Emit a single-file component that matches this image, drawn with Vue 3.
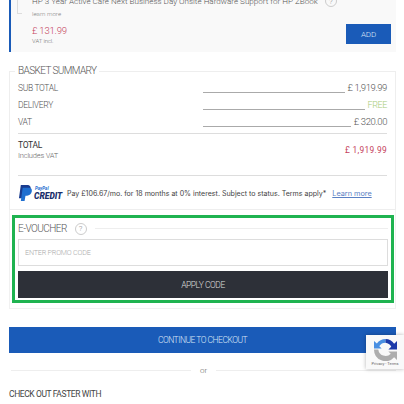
<script setup>
const rows = [
  { label: 'SUB TOTAL', value: '£ 1,919.99', cls: '' },
  { label: 'DELIVERY', value: 'FREE', cls: 'free' },
  { label: 'VAT', value: '£ 320.00', cls: '' }
]
</script>

<template>
  <main class="page">
    <section class="upsell">
      <div class="upsell-top">
        <span class="corner"></span>
        <div class="upsell-info">
          <div class="upsell-title">
            <span>HP 3 Year Active Care Next Business Day Onsite Hardware Support for HP ZBook</span>
            <span class="help">?</span>
          </div>
          <a class="learn">learn more</a>
        </div>
      </div>
      <div class="upsell-foot">
        <div>
          <div class="upsell-price">£ 131.99</div>
          <div class="vat-incl">VAT incl.</div>
        </div>
        <button class="add">ADD</button>
      </div>
    </section>

    <fieldset class="summary">
      <legend>BASKET SUMMARY</legend>
      <div class="row" v-for="row in rows" :key="row.label">
        <span class="row-label">{{ row.label }}</span>
        <span class="row-line"></span>
        <span class="row-value" :class="row.cls">{{ row.value }}</span>
      </div>
      <div class="total">
        <div>
          <div class="total-label">TOTAL</div>
          <div class="total-sub">Includes VAT</div>
        </div>
        <div class="total-value">£ 1,919.99</div>
      </div>
      <div class="credit">
        <svg class="pp" width="15" height="16" viewBox="0 0 16 17">
          <path d="M3 0h6.500C13 0 14 2 13.400 4.600 12.700 7.800 10.400 9 8 9H6l-1 5H1z" fill="#1a3c8f" />
          <path d="M5 3h6.600c2.600 0 3.600 1.800 3.100 4-.6 3-2.600 4.300-5 4.300H8L7 17H3z" fill="#1f6fd0" />
        </svg>
        <div class="pp-text">
          <span class="pp-top">PayPal</span>
          <span class="pp-bottom">CREDIT</span>
        </div>
        <span class="credit-text">Pay £106.67/mo. for 18 months at 0% interest. Subject to status. Terms apply*</span>
        <a class="credit-link">Learn more</a>
      </div>
    </fieldset>

    <div class="voucher-card">
      <div class="voucher">
        <div class="voucher-head">
          <span>E-VOUCHER</span>
          <span class="help">?</span>
          <span class="head-line"></span>
        </div>
        <input class="promo" placeholder="ENTER PROMO CODE" />
        <button class="apply">APPLY CODE</button>
      </div>
    </div>

    <button class="checkout">CONTINUE TO CHECKOUT</button>

    <div class="or"><span>or</span></div>
    <div class="faster">CHECK OUT FASTER WITH</div>

    <aside class="recaptcha">
      <svg width="23" height="23" viewBox="0 0 24 24">
        <path d="M12 1a11 11 0 0 0-9 4.700L0 3v8h8L5.500 8.500A8 8 0 0 1 12 5z" fill="#4a90e2" />
        <path d="M12 1a11 11 0 0 1 9 5l3-3v9h-9l3-3a8 8 0 0 0-6-4z" fill="#1c3aa9" />
        <path d="M0 12h4.500a7.600 7.600 0 0 0 13 4.500L15 14h9v9l-3-3A12 12 0 0 1 0 12z" fill="#adadad" />
      </svg>
      <span>Privacy - Terms</span>
    </aside>
  </main>
</template>

<style scoped>
.page {
  position: relative;
  width: 404px;
  height: 404px;
  overflow: hidden;
  padding: 0 8px 0 9px;
  box-sizing: border-box;
  font-family: Roboto, "Liberation Sans", sans-serif;
  font-weight: 300;
  color: #444;
  background: #fff;
}

.upsell {
  height: 60px;
  margin-top: -8px;
  padding: 3px 5px 0 6px;
  box-sizing: border-box;
  background: #f9f9f9;
  border-left: 2px solid #1a5bb8;
}

.upsell-top {
  display: flex;
  align-items: flex-start;
}

.corner {
  width: 5px;
  height: 19px;
  flex: none;
  border-left: 1px solid #ddd;
  border-bottom: 1px solid #ddd;
  box-sizing: border-box;
}

.upsell-info {
  margin-left: 10px;
  flex: 1;
}

.upsell-title {
  display: flex;
  align-items: center;
  gap: 7px;
  font-size: 8.100px;
  color: #555;
}

.learn {
  display: block;
  font-size: 6.200px;
  color: #888;
  margin-top: 3px;
}

.upsell-foot {
  display: flex;
  justify-content: space-between;
  margin-top: 4px;
  padding-left: 15px;
}

.upsell-price {
  font-size: 9.500px;
  letter-spacing: -0.2px;
  color: #c5415c;
  margin-top: 3px;
}

.vat-incl {
  font-size: 6px;
  letter-spacing: -0.1px;
  color: #777;
  margin-top: 1px;
}

.add {
  width: 45px;
  height: 20px;
  margin-top: 2px;
  border: 0;
  padding: 0;
  background: #1a5bb8;
  color: #dbe6f6;
  font: inherit;
  font-size: 8px;
  letter-spacing: -0.2px;
}

.summary {
  margin: 13px 0 0;
  padding: 2px 8px 0;
  height: 145px;
  box-sizing: border-box;
  border: 1px solid #eee;
  min-width: 0;
}

.summary legend {
  padding: 0 3px;
  margin-left: -3px;
  font-size: 10px;
  letter-spacing: -0.6px;
  line-height: 12px;
  color: #555;
}

.row {
  display: flex;
  align-items: flex-end;
  height: 17px;
  font-size: 8.500px;
  letter-spacing: -0.33px;
  color: #555;
}

.row-label {
  width: 185px;
  flex: none;
  align-self: center;
}

.row-line {
  flex: 1;
  height: 1px;
  margin: 0 3px 3px 0;
  background: #aaa;
}

.row-value {
  align-self: center;
  font-size: 9.500px;
  letter-spacing: -0.4px;
}

.free {
  color: #a8cc78;
  font-size: 9px;
}

.total {
  display: flex;
  justify-content: space-between;
  align-items: center;
  height: 43px;
  margin-top: 3px;
  padding-bottom: 9px;
  box-sizing: border-box;
  border-top: 1px solid #ddd;
  border-bottom: 1px solid #ddd;
}

.total-label {
  font-size: 8.500px;
  font-weight: 400;
  letter-spacing: -0.3px;
  color: #333;
}

.total-sub {
  font-size: 7.500px;
  letter-spacing: -0.2px;
  color: #666;
  margin-top: 1px;
}

.total-value {
  font-size: 8.400px;
  font-weight: 400;
  color: #c5415c;
  letter-spacing: 0.3px;
}

.credit {
  display: flex;
  align-items: center;
  margin-top: 9px;
}

.pp {
  flex: none;
}

.pp-text {
  display: flex;
  flex-direction: column;
  margin-left: 1px;
  width: 33px;
  flex: none;
}

.pp-top {
  font-size: 4.500px;
  font-style: italic;
  font-weight: 700;
  line-height: 5px;
  margin-left: 1px;
  color: #1f6fd0;
}

.pp-bottom {
  font-size: 8.500px;
  font-style: italic;
  font-weight: 900;
  line-height: 10px;
  color: #1a2f6b;
}

.credit-text {
  font-family: Inter, sans-serif;
  font-weight: 400;
  font-size: 7.050px;
  color: #444;
  white-space: nowrap;
}

.credit-link {
  font-family: Inter, sans-serif;
  font-weight: 400;
  font-size: 7.300px;
  color: #5a80c4;
  text-decoration: underline;
  margin-left: 6px;
  white-space: nowrap;
}

.voucher-card {
  height: 99px;
  padding: 5px 0 0 2px;
  box-sizing: border-box;
  border: 1px solid #f1f1f1;
  border-top: 0;
}

.voucher {
  width: 382px;
  height: 88px;
  padding: 4px 3px;
  box-sizing: border-box;
  border: 3px solid #1fb350;
}

.voucher-head {
  display: flex;
  align-items: center;
  gap: 8px;
  height: 13px;
  font-size: 10px;
  letter-spacing: -0.55px;
  color: #555;
}

.head-line {
  flex: 1;
  height: 1px;
  background: #eee;
}

.help {
  width: 12px;
  height: 12px;
  flex: none;
  display: flex;
  align-items: center;
  justify-content: center;
  border: 1px solid #ccc;
  border-radius: 50%;
  font-size: 8px;
  letter-spacing: 0;
  color: #888;
  box-sizing: border-box;
}

.promo {
  display: block;
  width: 100%;
  height: 27px;
  margin-top: 4px;
  padding: 0 6px;
  box-sizing: border-box;
  border: 1px solid #ddd;
  font: inherit;
  font-size: 7.200px;
  letter-spacing: -0.2px;
  outline: 0;
}

.promo::placeholder {
  color: #aaa;
}

.apply {
  display: block;
  width: 100%;
  height: 27px;
  margin-top: 5px;
  border: 0;
  padding: 0;
  background: #2d3038;
  color: #ddd;
  font: inherit;
  font-size: 8.500px;
  letter-spacing: -0.45px;
}

.checkout {
  display: block;
  width: 387px;
  height: 26px;
  margin-top: 18px;
  border: 0;
  padding: 0;
  background: #1a5bb8;
  color: #d8e4f6;
  font: inherit;
  font-size: 8.500px;
  letter-spacing: -0.5px;
}

.or {
  display: flex;
  align-items: center;
  gap: 9px;
  height: 12px;
  margin-top: 11px;
  padding-left: 2px;
  font-size: 8px;
  color: #666;
}

.or::before,
.or::after {
  content: "";
  flex: 1;
  height: 1px;
  background: #eee;
}

.faster {
  margin-top: 13px;
  font-size: 8.500px;
  letter-spacing: -0.4px;
  font-weight: 400;
  color: #444;
}

.recaptcha {
  position: absolute;
  top: 335px;
  left: 366px;
  width: 38px;
  height: 34px;
  padding-top: 3px;
  box-sizing: border-box;
  display: flex;
  flex-direction: column;
  align-items: center;
  background: #f9f9f9;
  box-shadow: 0 0 4px rgba(0, 0, 0, 0.3);
  font-family: Roboto, sans-serif;
  font-weight: 400;
  font-size: 4px;
  color: #666;
  white-space: nowrap;
}
</style>
